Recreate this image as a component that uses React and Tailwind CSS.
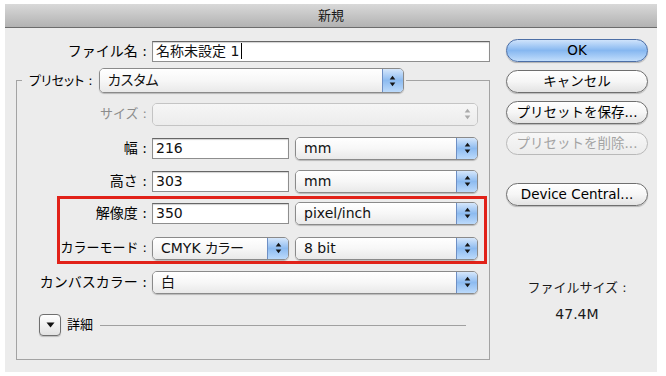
import React from 'react';

const FONT = "font-['DejaVu_Sans','Noto_Sans_CJK_JP',sans-serif]";

const Arrows = ({ color = '#151515' }) => (
  <svg width="7" height="12" viewBox="0 0 7 12">
    <path d="M3.5 0.8 L6.3 4.6 H0.7 Z" fill={color} />
    <path d="M0.7 7.4 H6.3 L3.5 11.2 Z" fill={color} />
  </svg>
);

const Field = ({ value, w, cursor }) => (
  <div
    className={`${w} h-[21px] shrink-0 bg-white border border-[#8e8e8e] border-t-[#666] shadow-[inset_0_1px_1px_rgba(0,0,0,0.18)] flex items-center pl-[3px] text-[14px] text-[#111]`}
  >
    {value}
    {cursor && <span className="ml-[2px] w-px h-[16px] bg-black" />}
  </div>
);

const Popup = ({ value, w, h = 'h-[23px]', disabled }) => (
  <div
    className={`${w} ${h} shrink-0 flex rounded-[5px] overflow-hidden border ${
      disabled ? 'border-[#c4c4c4]' : 'border-[#8a8a8a] shadow-[0_1px_1px_rgba(0,0,0,0.22)]'
    }`}
  >
    <div
      className={`flex-1 flex items-center pl-[8px] text-[14px] [font-feature-settings:'palt'] ${
        disabled
          ? 'bg-linear-to-b from-[#f6f6f6] to-[#ececec]'
          : 'bg-linear-to-b from-white via-[#f7f7f7] to-[#e9e9e9] text-[#111]'
      }`}
    >
      {value}
    </div>
    {disabled ? (
      <div className="w-[20px] flex items-center justify-center bg-linear-to-b from-[#f6f6f6] to-[#ececec]">
        <Arrows color="#a9a9a9" />
      </div>
    ) : (
      <div className="w-[21px] flex items-center justify-center border-l border-[#6e8fc4] bg-linear-to-b from-[#d6e7fb] via-[#8dbbf0] to-[#bcdafb]">
        <Arrows />
      </div>
    )}
  </div>
);

const Button = ({ children, primary, disabled, mt }) => (
  <div
    className={`${mt} w-[142px] h-[23px] rounded-full border flex items-center justify-center text-[13.5px] ${
      primary
        ? 'border-[#4d6fa6] bg-linear-to-b from-[#cfe3fb] via-[#86b7f0] to-[#c1ddfb] text-black shadow-[0_1px_1px_rgba(0,0,0,0.25)]'
        : disabled
        ? 'border-[#b9b9b9] bg-linear-to-b from-[#f7f7f7] to-[#ececec] text-[#a3a3a3]'
        : 'border-[#6f6f6f] bg-linear-to-b from-white via-[#f6f6f6] to-[#e3e3e3] text-black shadow-[0_1px_1px_rgba(0,0,0,0.22)]'
    }`}
  >
    {children}
  </div>
);

const Row = ({ label, labelW = 'w-[130px]', size = 'text-[13px]', mt, dim, children }) => (
  <div className={`${mt} h-[24px] flex items-center`}>
    <div className={`${labelW} ${size} shrink-0 text-right ${dim ? 'text-[#8c8c8c]' : 'text-black'}`}>
      {label}
    </div>
    <div className="ml-[5px] flex items-center gap-[6px]">{children}</div>
  </div>
);

export default function App() {
  return (
    <div className={`w-[666px] h-[376px] bg-white pt-[4px] pl-[5px] ${FONT}`}>
      <div className="w-[652px] h-[368px] flex flex-col">
        <div className="h-[24px] shrink-0 border-b border-[#6c6c6c] bg-linear-to-b from-[#d9d9d9] to-[#b2b2b2] flex items-center justify-center text-[13px] text-[#1a1a1a]">
          新規
        </div>
        <div className="flex-1 bg-[#ececec] flex">
          <div className="w-[485px] pl-[11px] pt-[12px]">
            <div className="h-[22px] flex items-center">
              <div className="w-[131px] text-right text-[14px] text-black">ファイル名 :</div>
              <div className="ml-[5px]">
                <Field w="w-[338px]" value="名称未設定 1" cursor />
              </div>
            </div>

            <fieldset className="mt-[6px] w-[474px] h-[292px] border border-[#a3a3a3]">
              <legend className="ml-[5px] pl-[7px] pr-[2px]">
                <div className="flex items-center">
                  <span className="text-[13px] text-black [font-feature-settings:'palt']">プリセット :</span>
                  <div className="ml-[6px]">
                    <Popup w="w-[305px]" h="h-[25px]" value="カスタム" />
                  </div>
                </div>
              </legend>

              <Row label="サイズ :" mt="mt-[9px]" dim>
                <Popup w="w-[326px]" value="" disabled />
              </Row>
              <Row label="幅 :" mt="mt-[10px]" size="text-[14px]">
                <Field w="w-[137px]" value="216" />
                <Popup w="w-[183px]" value="mm" />
              </Row>
              <Row label="高さ :" mt="mt-[9px]" size="text-[14px]">
                <Field w="w-[137px]" value="303" />
                <Popup w="w-[183px]" value="mm" />
              </Row>

              <div className="mt-[3px] ml-[40px] w-[430px] border-[3px] border-[#e12219] pt-[2px] pb-[1px]">
                <Row label="解像度 :" labelW="w-[87px]" size="text-[14px]">
                  <Field w="w-[137px]" value="350" />
                  <Popup w="w-[183px]" value="pixel/inch" />
                </Row>
                <Row label="カラーモード :" labelW="w-[87px]" mt="mt-[11px]">
                  <Popup w="w-[137px]" value="CMYK カラー" />
                  <Popup w="w-[183px]" value="8 bit" />
                </Row>
              </div>

              <Row label="カンバスカラー :" mt="mt-[6px]" size="text-[14px]">
                <Popup w="w-[326px]" value="白" />
              </Row>

              <div className="mt-[19px] h-[24px] flex items-center">
                <div className="ml-[22px] w-[22px] h-[22px] rounded-[4px] border border-[#6f6f6f] bg-linear-to-b from-white to-[#e2e2e2] shadow-[0_1px_1px_rgba(0,0,0,0.2)] flex items-center justify-center">
                  <svg width="9" height="6" viewBox="0 0 9 6">
                    <path d="M0.5 0.5 H8.5 L4.5 5.5 Z" fill="#111" />
                  </svg>
                </div>
                <span className="ml-[6px] text-[13px] text-black">詳細</span>
                <div className="ml-[7px] w-[366px] h-px bg-[#a0a0a0]" />
              </div>
            </fieldset>
          </div>

          <div className="ml-[16px] w-[142px] pt-[11px] flex flex-col">
            <Button primary>OK</Button>
            <Button mt="mt-[8px]">キャンセル</Button>
            <Button mt="mt-[8px]">プリセットを保存...</Button>
            <Button mt="mt-[8px]" disabled>プリセットを削除...</Button>
            <Button mt="mt-[28px]">Device Central...</Button>
            <div className="mt-[72px] text-center text-[13px] text-[#1a1a1a]">ファイルサイズ :</div>
            <div className="mt-[6px] text-center text-[14px] text-[#1a1a1a]">47.4M</div>
          </div>
        </div>
      </div>
    </div>
  );
}
